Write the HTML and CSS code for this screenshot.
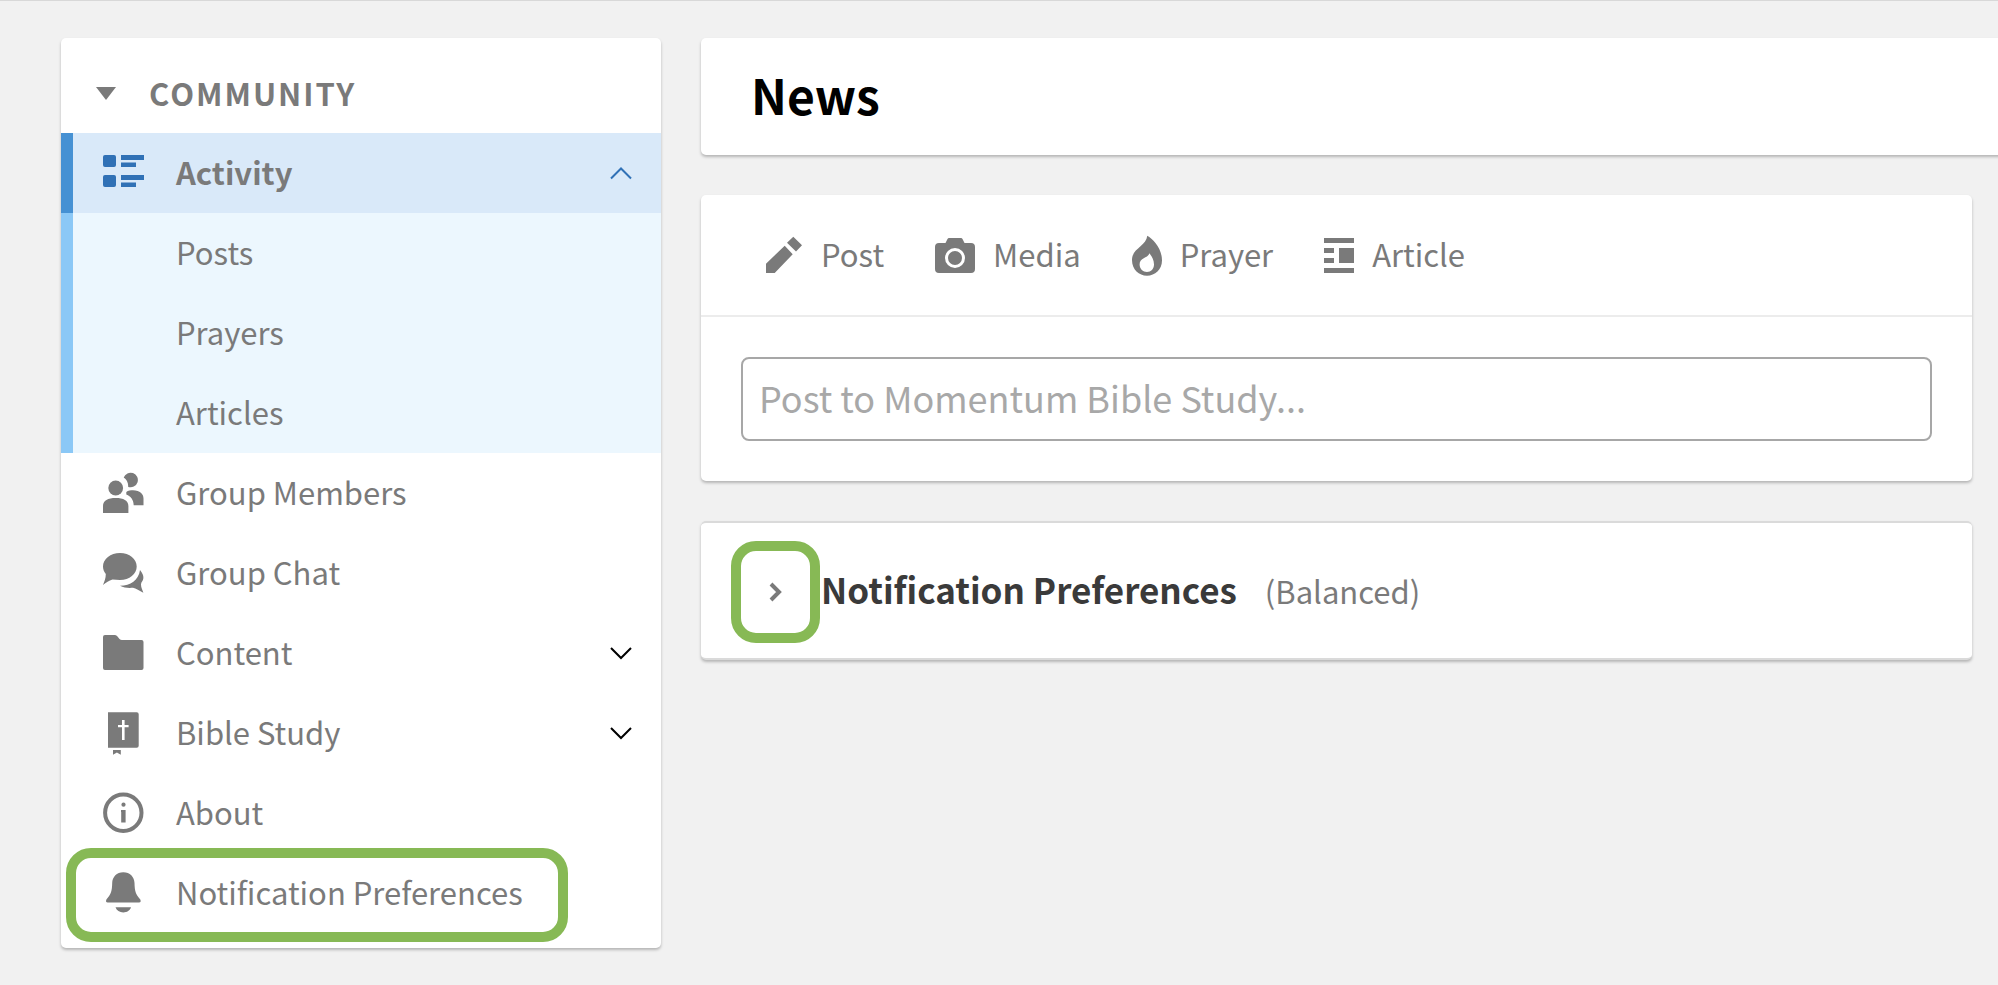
FILE: index.html
```html
<!DOCTYPE html>
<html lang="en">
<head>
    <meta charset="UTF-8">
    <meta name="viewport" content="width=device-width, initial-scale=1.0">
    <link rel="stylesheet" href="styles.css">
    <title>News</title>
</head>
<body>
<div class="page">

    <nav class="card sidebar">
        <button type="button" class="group-toggle">
            <svg class="triangle" width="20" height="13" viewBox="0 0 20 13"><path d="M0 0H20L10 13Z"/></svg>
            <span class="label">Community</span>
        </button>

        <a href="#" class="nav-item active">
            <svg class="icon" viewBox="0 0 40 40"><rect y="2" width="13" height="12" rx="2"/><rect y="22" width="13" height="12" rx="2"/><path d="M18 2H41V7H18ZM18 9.500H33V14H18ZM18 22H41V27H18ZM18 29.500H33V34H18Z"/></svg>
            <span class="label">Activity</span>
            <svg class="chevron" viewBox="0 0 22 14"><path d="M1 12.500L11 2.500L21 12.500"/></svg>
        </a>
        <div class="subnav">
            <a href="#">Posts</a>
            <a href="#">Prayers</a>
            <a href="#">Articles</a>
        </div>

        <a href="#" class="nav-item">
            <svg class="icon" viewBox="0 0 40 40"><circle cx="12.700" cy="15" r="7.400"/><path d="M0 40V33C0 27.500 5 25 12.700 25S25.400 27.500 25.400 33V40ZM20.700 4.500A7.300 7.300 0 1 1 25.200 13.900C25.400 9.500 23.500 6.500 20.700 4.500ZM23.300 19C25 17.500 28 17.300 30 17.300 37 17.300 40.500 21 40.500 25.500V32.300H30.700C30.500 27 28 23.500 23.300 21.600Z"/></svg>
            <span class="label">Group Members</span>
        </a>
        <a href="#" class="nav-item">
            <svg class="icon" viewBox="0 0 40 40"><path d="M17 0C26.500 0 33.700 6 33.700 13.500S26.500 27 17 27C14.500 27 12 26.700 9.500 26.600 6 27.500 3 30 0 32 1.500 28.500 2.800 25 2.800 21 1 18.500 0 16.500 0 13.500 0 6 7.500 0 17 0ZM37 17C39.500 20 40.500 22.500 40.400 25 40.200 28 38 29 38 31.500 38 34.500 39.500 37 40.400 39.800 36.500 38 33 35.500 30 34.800 26 35.200 21 35 17 32.800 27.500 32.500 35.500 27.500 37 17Z"/></svg>
            <span class="label">Group Chat</span>
        </a>
        <a href="#" class="nav-item">
            <svg class="icon" viewBox="0 0 40 40"><path d="M2 2H12Q13.500 2 14.500 3.500L16.500 6Q17.500 7 19 7H38.500Q40.500 7 40.500 9V35Q40.500 37 38.500 37H2Q0 37 0 35V4Q0 2 2 2Z"/></svg>
            <span class="label">Content</span>
            <svg class="chevron" viewBox="0 0 22 14"><path d="M1 2L11 12L21 2"/></svg>
        </a>
        <a href="#" class="nav-item">
            <svg class="icon" viewBox="0 0 40 40"><path fill-rule="evenodd" d="M5-.7H33.700Q35.700-.7 35.700 1.300V32.700Q35.700 34.700 33.700 34.700H5ZM19 7V12H15V14.300H19V27H21.600V14.300H25.600V12H21.600V7ZM10 37H17.800V41.700L13.900 39.500L10 41.700Z"/></svg>
            <span class="label">Bible Study</span>
            <svg class="chevron" viewBox="0 0 22 14"><path d="M1 2L11 12L21 2"/></svg>
        </a>
        <a href="#" class="nav-item">
            <svg class="icon" viewBox="0 0 40 40"><circle class="ring" cx="20.300" cy="19.700" r="18.200"/><circle cx="20.500" cy="11.700" r="2.100"/><path d="M18 17H22.600V29.500H18.200V19H18Z"/></svg>
            <span class="label">About</span>
        </a>
        <a href="#" class="nav-item marked">
            <svg class="icon" viewBox="0 0 40 40"><path d="M20.300-.7C27-.7 31.300 4 31.500 10 31.700 18 32.500 21 37.300 26.500Q38.500 29.500 36 29.500H4.700Q2.200 29.500 3.400 26.500C8.200 21 9 18 9.200 10 9.400 4 13.700-.7 20.300-.7ZM12.500 34.300H28C27 37.500 24 39.500 20.300 39.500S13.600 37.500 12.500 34.300Z"/></svg>
            <span class="label">Notification Preferences</span>
        </a>
    </nav>

    <main class="content">
        <header class="card heading">
            <h1>News</h1>
        </header>

        <section class="card composer">
            <div class="post-types">
                <button type="button">
                    <svg width="40" height="40" viewBox="0 0 40 40"><path d="M3 38V28.700L21.700 10.700L29.700 19.300L11.700 38ZM24 7.700L30.300 1.700L39 10.300L33 16.500Z"/></svg>
                    <span class="label">Post</span>
                </button>
                <button type="button">
                    <svg width="40" height="40" viewBox="0 0 40 40"><path fill-rule="evenodd" d="M4 8H10.500L12.500 4Q13 3 14 3H26Q27 3 27.500 4L29.500 8H36Q40 8 40 12V34Q40 38 36 38H4Q0 38 0 34V12Q0 8 4 8ZM20 13A10 10 0 1 0 20 33A10 10 0 1 0 20 13ZM20 16A7 7 0 1 1 20 30A7 7 0 1 1 20 16Z"/></svg>
                    <span class="label">Media</span>
                </button>
                <button type="button">
                    <svg width="30" height="40" viewBox="0 0 30 40"><path fill-rule="evenodd" d="M15.300.7C21 4 30 13 30 25.500 30 34.500 23 40.700 15 40.700S0 34.500 0 25C0 13 14 11.500 15.300.7ZM17.300 18.300C19.500 21 22 24.500 22 29.500 22 34 19 37 15 37S7.600 34 7.600 29.500C7.600 22.500 16.500 23 17.300 18.300Z"/></svg>
                    <span class="label">Prayer</span>
                </button>
                <button type="button">
                    <svg width="30" height="40" viewBox="0 0 30 40"><path d="M0 3H30V8H0ZM0 13H10V18H0ZM0 23H10V28H0ZM15 13H30V28H15ZM0 33H30V38H0Z"/></svg>
                    <span class="label">Article</span>
                </button>
            </div>
            <div class="post-box">
                <input type="text" aria-label="Post to Momentum Bible Study" placeholder="Post to Momentum Bible Study...">
            </div>
        </section>

        <section class="card preferences">
            <button type="button" class="expand" aria-label="Show notification preferences">
                <svg width="14" height="20" viewBox="0 0 14 20"><path d="M2 2L10 10L2 18"/></svg>
            </button>
            <h2>Notification Preferences</h2>
            <span class="label level">(Balanced)</span>
        </section>
    </main>

</div>
</body>
</html>
```
FILE: styles.css
```css
* {
    box-sizing: border-box;
}
body {
    margin: 0;
    border-top: 1px solid #d8d8d8;
    background-color: #f1f1f1;
    color: #7a7a7a;
    font-family: "Noto Sans CJK SC", "Noto Sans CJK JP", sans-serif;
    font-size: 31px;
    line-height: 40px;
    overflow-x: hidden;
}
a {
    color: inherit;
    text-decoration: none;
}
button {
    border: 0;
    padding: 0;
    background: none;
    color: inherit;
    font: inherit;
    cursor: pointer;
}
svg {
    flex: none;
    fill: currentColor;
    overflow: visible;
}
h1, h2 {
    margin: 0;
}
.label {
    padding-bottom: 2px;
}
.page {
    display: flex;
    align-items: flex-start;
    gap: 40px;
    padding: 37px 26px 37px 61px;
}
.card {
    background-color: #fff;
    border-radius: 5px;
    box-shadow: 0 2px 3px rgba(0, 0, 0, 0.25);
}

/* Sidebar */
.sidebar {
    flex: none;
    width: 600px;
    padding-bottom: 15px;
}
.group-toggle {
    display: flex;
    align-items: center;
    gap: 33px;
    width: 100%;
    height: 95px;
    padding: 16px 35px 0;
    font-weight: 700;
    letter-spacing: 2px;
    text-transform: uppercase;
}
.nav-item {
    position: relative;
    display: flex;
    align-items: center;
    gap: 33px;
    height: 80px;
    padding: 0 29px 0 30px;
    border-left: 12px solid transparent;
}
.nav-item .icon {
    width: 40px;
    height: 40px;
}
.ring {
    fill: none;
    stroke: currentColor;
    stroke-width: 4;
}
.chevron {
    width: 22px;
    height: 14px;
    margin-left: auto;
    fill: none;
    stroke: #000;
    stroke-width: 2;
}
.active {
    border-color: #4691d3;
    background-color: #d9e9f9;
    font-weight: 700;
}
.active .icon {
    color: #3071b6;
}
.active .chevron {
    stroke: #3071b6;
}
.subnav {
    border-left: 12px solid #8bc8f6;
    background-color: #ecf7fe;
}
.subnav a {
    display: block;
    padding: 19px 0 21px 103px;
}

/* Green outlines */
.marked::after,
.expand::after {
    content: "";
    position: absolute;
    border: 10px solid #87b955;
    border-radius: 25px;
}
.marked::after {
    inset: -5px 93px -9px -7px;
}
.expand::after {
    inset: 0;
}

/* Main column */
.content {
    flex: 1;
    display: flex;
    flex-direction: column;
    gap: 40px;
}
.heading {
    margin-right: -40px;
    padding: 26px 50px 31px;
}
.heading h1 {
    color: #000;
    font-size: 48px;
    line-height: 60px;
}
.post-types {
    display: flex;
    gap: 51px;
    padding: 40px 62px;
    border-bottom: 2px solid #ececec;
}
.post-types button {
    display: flex;
    align-items: center;
    gap: 18px;
    height: 40px;
}
.post-box {
    padding: 40px;
}
.post-box input {
    display: block;
    width: 100%;
    height: 84px;
    padding: 0 16px 4px;
    border: 2px solid #a7a7a7;
    border-radius: 8px;
    background-color: #fff;
    font: inherit;
    font-size: 36px;
}
.post-box input::placeholder {
    color: #a8a8a8;
    opacity: 1;
}
.preferences {
    display: flex;
    align-items: center;
    padding: 18px 30px 15px;
    border-top: 2px solid #dadada;
    border-bottom: 2px solid #dadada;
}
.preferences h2 {
    padding: 0 0 6px 1px;
    color: #3a3a3a;
    font-size: 35px;
}
.expand {
    position: relative;
    display: flex;
    align-items: center;
    justify-content: center;
    width: 89px;
    height: 102px;
}
.expand svg {
    fill: none;
    stroke: currentColor;
    stroke-width: 4;
}
.level {
    margin-left: 28px;
}
```
